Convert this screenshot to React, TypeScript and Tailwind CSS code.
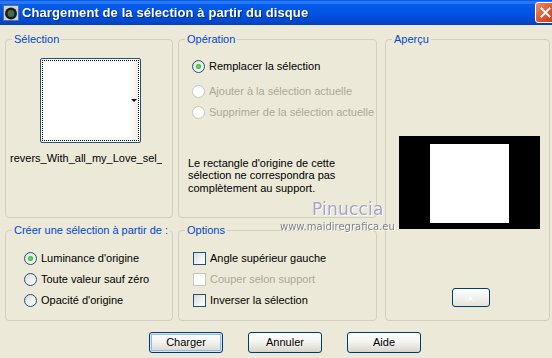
import React from 'react'

const font = "font-['Liberation_Sans',Arial,sans-serif]"

function Radio({ checked, disabled }: { checked?: boolean; disabled?: boolean }) {
  return (
    <span
      className={
        disabled
          ? 'w-[13px] h-[13px] shrink-0 rounded-full border border-[#CAC8BB] bg-white'
          : 'w-[13px] h-[13px] shrink-0 rounded-full border border-[#1C5180] bg-linear-to-br from-[#DCDCD7] to-white flex items-center justify-center'
      }
    >
      {checked && <span className="w-[5px] h-[5px] rounded-full bg-radial from-[#6FE06A] to-[#119E11]" />}
    </span>
  )
}

function Check({ disabled }: { disabled?: boolean }) {
  return (
    <span
      className={
        disabled
          ? 'w-[13px] h-[13px] shrink-0 border border-[#CAC8BB] bg-white'
          : 'w-[13px] h-[13px] shrink-0 border border-[#1C5180] bg-linear-to-br from-[#DCDCD7] to-white'
      }
    />
  )
}

function Row({ children, label, disabled, className }: { children: React.ReactNode; label: string; disabled?: boolean; className?: string }) {
  return (
    <div className={`flex items-center gap-[4px] h-[13px] ${className ?? ''}`}>
      {children}
      <span className={disabled ? 'text-[#ACA899] leading-[13px]' : 'text-black leading-[13px]'}>{label}</span>
    </div>
  )
}

function Group({ title, className, children }: { title: string; className: string; children: React.ReactNode }) {
  return (
    <fieldset className={`border border-[#D0D0BF] rounded-[4px] ${className}`}>
      <legend className="ml-[6px] px-[2px] text-[#0046D5] leading-[13px]">{title}</legend>
      {children}
    </fieldset>
  )
}

function XpButton({ label, isDefault }: { label: string; isDefault?: boolean }) {
  return (
    <button
      className={
        isDefault
          ? 'w-[74px] h-[21px] rounded-[3px] border border-[#003C74] bg-linear-to-b from-white via-[#F3F3EF] to-[#D8D4C8] shadow-[inset_0_0_0_1px_#CEE7FF,inset_0_0_0_2px_#98B8EA] text-black leading-[13px]'
          : 'w-[74px] h-[21px] rounded-[3px] border border-[#003C74] bg-linear-to-b from-white via-[#F3F3EF] to-[#D8D4C8] text-black leading-[13px]'
      }
    >
      {label}
    </button>
  )
}

export default function App() {
  return (
    <div className={`relative w-[552px] h-[358px] overflow-hidden bg-[#ECE9D8] text-[11px] ${font} flex flex-col`}>
      {/* Title bar */}
      <div className="h-[25px] shrink-0 flex items-center bg-linear-to-b from-[#0A5EEB] via-[#0055E5] to-[#0042C4] relative">
        <div className="h-[3px] absolute top-[1px] left-0 right-0 bg-[#3D8BFF] opacity-60" />
        <svg width="16" height="16" viewBox="0 0 16 16" className="ml-[3px] mt-[1px] relative">
          <rect x="0.5" y="0.5" width="15" height="15" fill="#C8D4E4" stroke="#5A7090" />
          <circle cx="8" cy="8.5" r="6" fill="#1A1A1A" />
          <circle cx="8" cy="8.5" r="3.5" fill="#2E7A3A" />
          <circle cx="6.5" cy="7" r="1.5" fill="#C23A2A" />
          <circle cx="9.5" cy="10" r="1.2" fill="#3060D0" />
        </svg>
        <span className="ml-[3px] text-white font-bold text-[13px] tracking-[0.1px] relative drop-shadow-[1px_1px_0_#0A2A8A]">
          Chargement de la sélection à partir du disque
        </span>
        <div className="absolute left-[535px] top-[2px] w-[21px] h-[21px] rounded-[3px] border border-white bg-linear-to-br from-[#F08B6A] via-[#E2582F] to-[#C8391B] flex items-center justify-center">
          <svg width="11" height="11" viewBox="0 0 11 11">
            <path d="M1.5 1.5 L9.5 9.5 M9.5 1.5 L1.5 9.5" stroke="white" strokeWidth="2" strokeLinecap="square" />
          </svg>
        </div>
      </div>

      {/* Body */}
      <div className="flex-1 flex flex-col pl-[5px] pt-[8px]">
        <div className="flex">
          {/* Left column */}
          <div className="w-[168px] flex flex-col gap-[6px]">
            <Group title="Sélection" className="h-[185px]">
              <div className="relative ml-[34px] mt-[12px] w-[101px] h-[85px] rounded-[2px] border border-[#1C5180] bg-white p-[1px]">
                <div className="w-full h-full border border-dotted border-black bg-linear-to-r from-white from-90% to-[#ECECE6]" />
                <div className="absolute right-[3px] top-[40px] w-0 h-0 border-l-[3px] border-r-[3px] border-t-[3px] border-l-transparent border-r-transparent border-t-black" />
              </div>
              <div className="ml-[4px] mt-[9px] w-[152px] overflow-hidden whitespace-nowrap leading-[13px]">
                revers_With_all_my_Love_sel_0
              </div>
            </Group>
            <Group title="Créer une sélection à partir de :" className="h-[97px]">
              <div className="ml-[18px] mt-[15px] flex flex-col gap-[8px]">
                <Row label="Luminance d'origine"><Radio checked /></Row>
                <Row label="Toute valeur sauf zéro"><Radio /></Row>
                <Row label="Opacité d'origine"><Radio /></Row>
              </div>
            </Group>
          </div>

          {/* Middle column */}
          <div className="w-[199px] ml-[5px] flex flex-col gap-[6px]">
            <Group title="Opération" className="h-[185px]">
              <div className="ml-[13px] mt-[14px] flex flex-col">
                <Row label="Remplacer la sélection"><Radio checked /></Row>
                <Row label="Ajouter à la sélection actuelle" disabled className="mt-[12px]"><Radio disabled /></Row>
                <Row label="Supprimer de la sélection actuelle" disabled className="mt-[8px]"><Radio disabled /></Row>
              </div>
              <p className="ml-[9px] mt-[38px] leading-[12.3px]">
                Le rectangle d'origine de cette<br />
                sélection ne correspondra pas<br />
                complètement au support.
              </p>
            </Group>
            <Group title="Options" className="h-[97px]">
              <div className="ml-[14px] mt-[15px] flex flex-col gap-[8px]">
                <Row label="Angle supérieur gauche"><Check /></Row>
                <Row label="Couper selon support" disabled><Check disabled /></Row>
                <Row label="Inverser la sélection"><Check /></Row>
              </div>
            </Group>
          </div>

          {/* Right column */}
          <Group title="Aperçu" className="w-[165px] ml-[8px] h-[288px]">
            <div className="ml-[13px] mt-[90px] w-[141px] h-[93px] bg-black flex items-center justify-center pt-[2px]">
              <div className="w-[79px] h-[79px] bg-white" />
            </div>
            <div className="ml-[66px] mt-[59px] w-[38px] h-[19px] rounded-[3px] border border-[#003C74] bg-linear-to-b from-white to-[#E6E3DA] flex items-center justify-center">
              <svg width="14" height="8" viewBox="0 0 14 8">
                <rect x="2" y="0" width="3" height="3" fill="#F4F4F4" />
                <rect x="8" y="0" width="3" height="3" fill="#F4F4F4" />
                <rect x="5" y="3" width="3" height="3" fill="#FFFFFF" />
                <rect x="2" y="5" width="3" height="3" fill="#F0F0F0" />
                <rect x="8" y="5" width="3" height="3" fill="#F0F0F0" />
              </svg>
            </div>
          </Group>
        </div>

        {/* Buttons */}
        <div className="flex gap-[25px] ml-[144px] mt-[11px]">
          <XpButton label="Charger" isDefault />
          <XpButton label="Annuler" />
          <XpButton label="Aide" />
        </div>
      </div>

      {/* Watermark */}
      <div className="absolute left-[312px] top-[201px] text-[17px] tracking-[0.2px] text-[#A4A4C8] font-['DejaVu_Sans',sans-serif] drop-shadow-[1px_1px_0_#ffffff] leading-[17px]">
        Pinuccia
      </div>
      <div className="absolute left-[280px] top-[222px] text-[10px] text-[#80808E] font-['DejaVu_Sans',sans-serif] drop-shadow-[1px_1px_0_#ffffff] leading-[10px]">
        www.maidiregrafica.eu
      </div>
    </div>
  )
}
